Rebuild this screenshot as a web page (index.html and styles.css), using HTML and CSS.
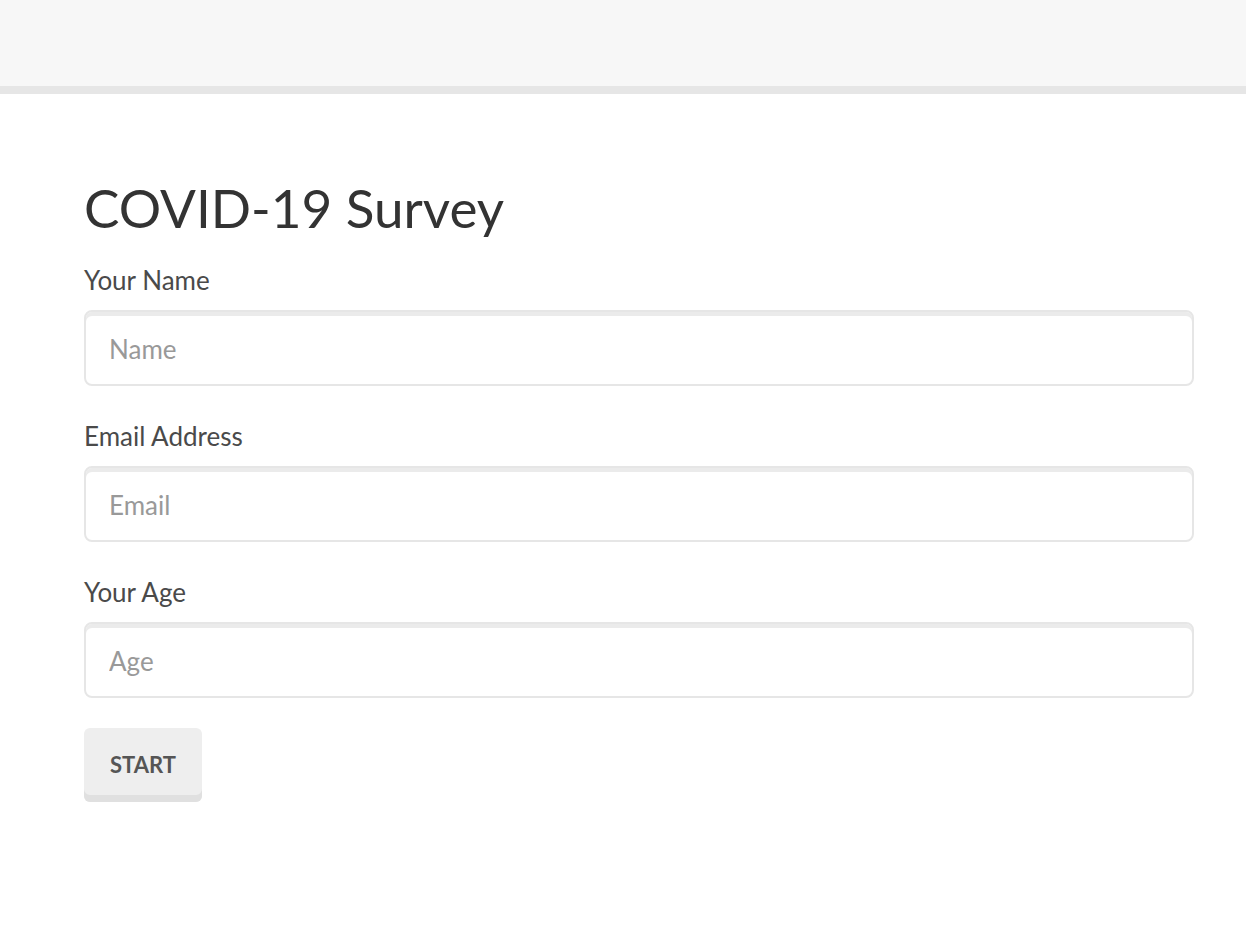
FILE: index.html
```html
<!DOCTYPE html>
<html>
<head>
<meta charset="utf-8">
<link rel="stylesheet" href="styles.css">
</head>
<body>
<header class="topbar"></header>
<main class="page">
  <h1 class="title">COVID-19 Survey</h1>
  <form class="survey">
    <div class="field">
      <label class="label">Your Name</label>
      <input class="input" type="text" placeholder="Name">
    </div>
    <div class="field">
      <label class="label">Email Address</label>
      <input class="input" type="text" placeholder="Email">
    </div>
    <div class="field">
      <label class="label">Your Age</label>
      <input class="input" type="text" placeholder="Age">
    </div>
    <button class="btn" type="button">START</button>
  </form>
</main>
</body>
</html>
```
FILE: styles.css
```css
html, body {
  margin: 0;
  padding: 0;
  background: #fff;
  font-family: "Lato", "Liberation Sans", sans-serif;
  color: #333;
}
.topbar {
  height: 86px;
  background: #f7f7f7;
  border-bottom: 8px solid #e6e6e6;
}
.page {
  padding: 72px 52px 0 84px;
}
.title {
  margin: 0;
  font-weight: 400;
  font-size: 53px;
  line-height: 84px;
  color: #333;
}
.survey {
  display: flex;
  flex-direction: column;
}
.field {
  display: flex;
  flex-direction: column;
}
.label {
  font-size: 26px;
  line-height: 32px;
  color: #4a4a4a;
  margin: 0 0 14px 0;
}
.field:first-child .label {
  margin-top: 14px;
}
.input {
  box-sizing: border-box;
  height: 76px;
  width: 100%;
  margin: 0 0 34px 0;
  border: 2px solid #e6e6e6;
  border-radius: 8px;
  box-shadow: inset 0 4px 0 #ebebeb;
  padding: 2px 23px 0 23px;
  font-family: inherit;
  font-size: 26px;
  color: #333;
  outline: none;
  background: #fff;
}
.input::placeholder {
  color: #999;
}
.btn {
  align-self: flex-start;
  margin-top: -4px;
  width: 118px;
  height: 74px;
  border: none;
  border-radius: 6px;
  background: #eeeeee;
  box-shadow: inset 0 -7px 0 #e0e0e0;
  font-family: inherit;
  font-weight: 700;
  font-size: 22px;
  color: #555;
  padding: 0 0 2px 0;
}
```
